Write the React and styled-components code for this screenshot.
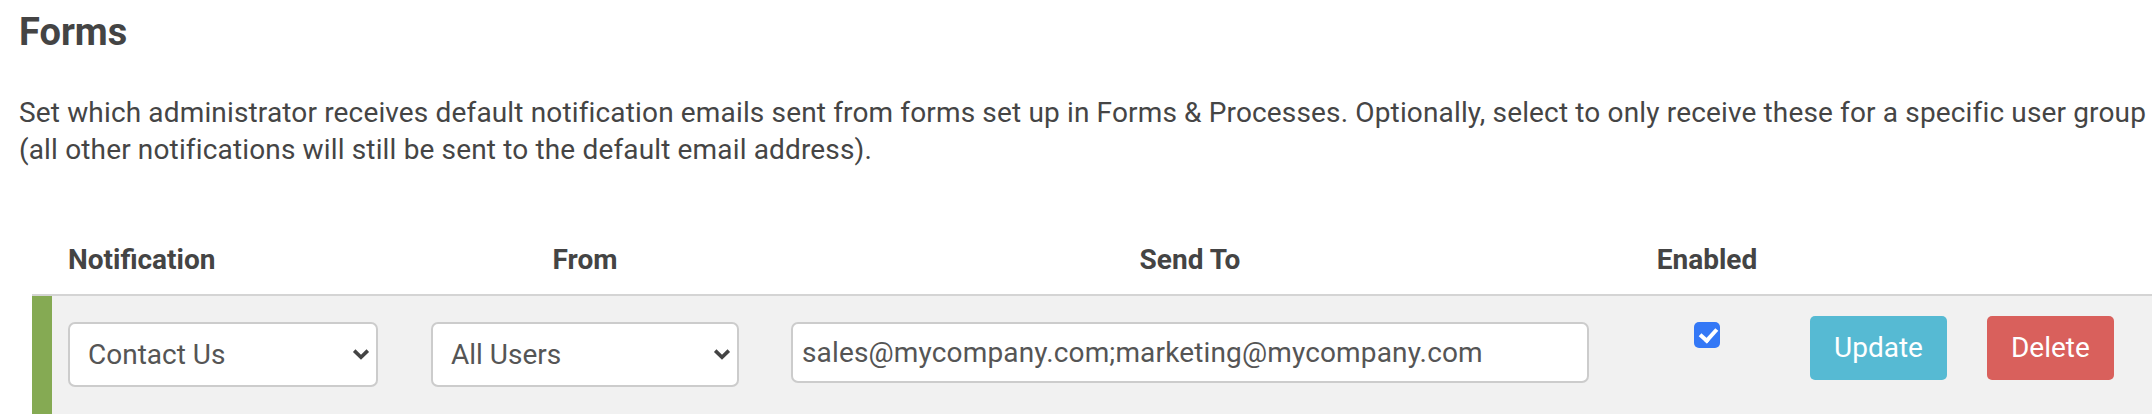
import React from 'react'
import styled, { createGlobalStyle, css } from 'styled-components'

const GlobalStyle = createGlobalStyle`
  html, body {
    margin: 0;
    padding: 0;
    background: #ffffff;
    overflow: hidden;
  }
  body {
    font-family: Roboto, "Liberation Sans", Arial, sans-serif;
    color: #444444;
  }
  * {
    box-sizing: border-box;
  }
`

const columns = css`
  display: grid;
  grid-template-columns: 363px 360px 850px 169px auto;
`

const Page = styled.div`
  padding: 12px 0 0 19px;
`

const Title = styled.h2`
  margin: 0;
  font-size: 38px;
  line-height: 1.1;
  font-weight: 700;
  color: #444444;
`

const Intro = styled.p`
  margin: 40px 0 0;
  font-size: 28px;
  line-height: 37px;
  letter-spacing: 0.15px;
  white-space: nowrap;
  color: #454545;
`

const Table = styled.div`
  margin: 72px 0 0 13px;
`

const HeadRow = styled.div`
  ${columns}
  padding: 0 0 14px 36px;
  border-bottom: 2px solid #d4d4d4;
`

const HeadCell = styled.div`
  width: ${p => p.$w}px;
  text-align: ${p => p.$align || 'center'};
  font-size: 28px;
  line-height: 40px;
  font-weight: 700;
  color: #444444;
`

const Row = styled.div`
  display: flex;
  height: 118px;
  background: #f1f1f1;
`

const Bar = styled.div`
  width: 20px;
  flex-shrink: 0;
  background: #85aa53;
`

const RowGrid = styled.div`
  ${columns}
  flex: 1;
  align-items: start;
  padding: 26px 0 0 16px;
`

const SelectBox = styled.div`
  position: relative;
  width: ${p => p.$w}px;
`

const Select = styled.select`
  appearance: none;
  -webkit-appearance: none;
  width: 100%;
  height: 65px;
  margin: 0;
  padding: 0 44px 0 18px;
  border: 2px solid #cccccc;
  border-radius: 7px;
  background: #ffffff;
  font-family: inherit;
  font-size: 28px;
  color: #555555;
  outline: none;
`

const Chevron = styled.svg`
  position: absolute;
  top: 26px;
  right: 8px;
  width: 18px;
  height: 12px;
  pointer-events: none;
`

const TextInput = styled.input`
  width: ${p => p.$w}px;
  height: 61px;
  margin: 0;
  padding: 0 9px;
  border: 2px solid #cccccc;
  border-radius: 7px;
  background: #ffffff;
  font-family: inherit;
  font-size: 28px;
  letter-spacing: 0.15px;
  color: #555555;
  outline: none;
`

const CheckCell = styled.div`
  width: 132px;
  display: flex;
  justify-content: center;
`

const Check = styled.input`
  appearance: none;
  -webkit-appearance: none;
  position: relative;
  width: 26px;
  height: 26px;
  margin: 0;
  border-radius: 5px;
  background: #3478f6;
  &::after {
    content: '';
    position: absolute;
    left: 9px;
    top: 3px;
    width: 7px;
    height: 13px;
    border-right: 4px solid #ffffff;
    border-bottom: 4px solid #ffffff;
    transform: rotate(42deg);
  }
`

const Actions = styled.div`
  display: flex;
  gap: 40px;
  margin-top: -6px;
`

const Button = styled.button`
  height: 64px;
  padding: 0 24px;
  border: none;
  border-radius: 5px;
  background: ${p => (p.$danger ? '#d9605c' : '#56bad3')};
  color: #ffffff;
  font-family: inherit;
  font-size: 28px;
  cursor: pointer;
`

const ChevronIcon = () => (
  <Chevron viewBox="0 0 18 12">
    <path d="M2.2 2.6 L9 9.2 L15.8 2.6" fill="none" stroke="#444" strokeWidth="3.6" />
  </Chevron>
)

const Dropdown = ({ width, value, options }) => (
  <SelectBox $w={width}>
    <Select defaultValue={value}>
      {options.map(o => <option key={o}>{o}</option>)}
    </Select>
    <ChevronIcon />
  </SelectBox>
)

export default function App() {
  return (
    <Page>
      <GlobalStyle />
      <Title>Forms</Title>
      <Intro>
        Set which administrator receives default notification emails sent from forms set up in Forms &amp; Processes. Optionally, select to only receive these for a specific user group
        <br />
        (all other notifications will still be sent to the default email address).
      </Intro>
      <Table>
        <HeadRow>
          <HeadCell $w={310} $align="left">Notification</HeadCell>
          <HeadCell $w={308}>From</HeadCell>
          <HeadCell $w={798}>Send To</HeadCell>
          <HeadCell $w={132}>Enabled</HeadCell>
          <div />
        </HeadRow>
        <Row>
          <Bar />
          <RowGrid>
            <Dropdown width={310} value="Contact Us" options={['Contact Us', 'Enquiry', 'Feedback']} />
            <Dropdown width={308} value="All Users" options={['All Users', 'Members', 'Staff']} />
            <TextInput $w={798} defaultValue="sales@mycompany.com;marketing@mycompany.com" />
            <CheckCell>
              <Check type="checkbox" defaultChecked />
            </CheckCell>
            <Actions>
              <Button>Update</Button>
              <Button $danger>Delete</Button>
            </Actions>
          </RowGrid>
        </Row>
      </Table>
    </Page>
  )
}
